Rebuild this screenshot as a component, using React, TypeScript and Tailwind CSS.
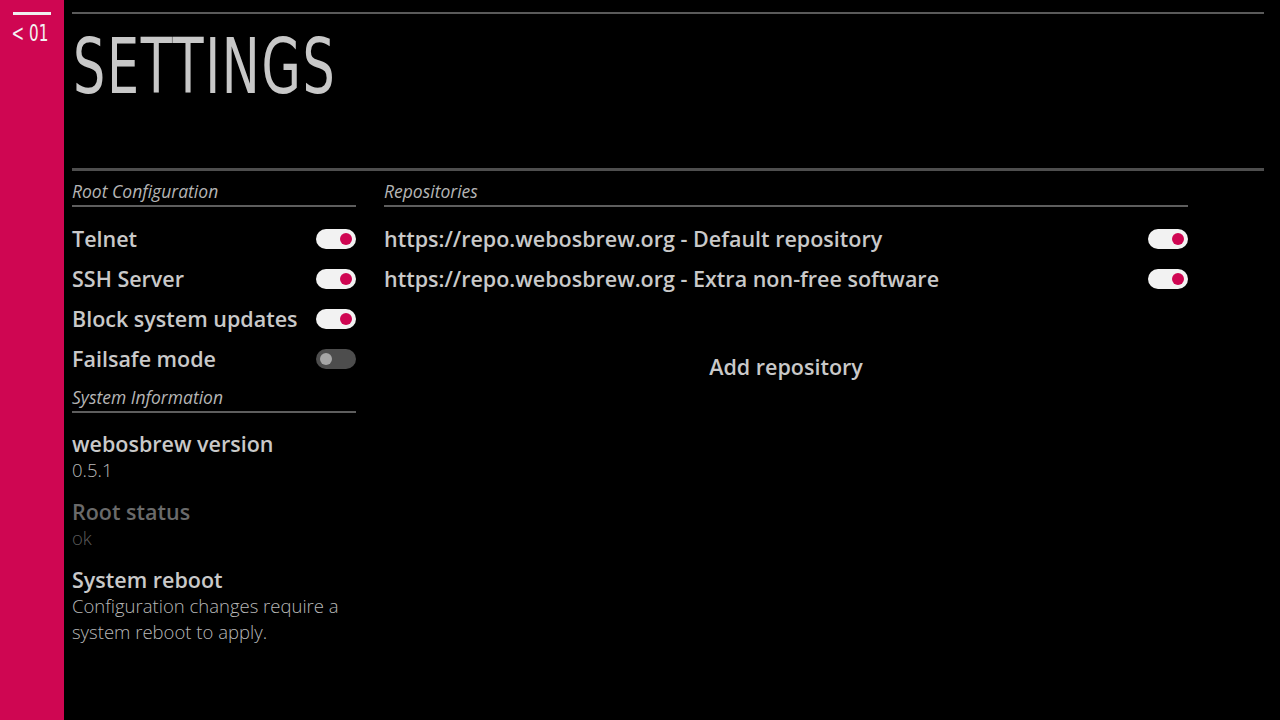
import React from 'react';

const font = { fontFamily: '"Open Sans", "Liberation Sans", sans-serif' };

const Toggle = ({ on }: { on: boolean }) => (
    <div
        className={`w-[40px] h-[20px] rounded-full flex items-center px-[4px] shrink-0 -mt-[2px] ${
            on ? 'bg-[#f2f2f2] justify-end' : 'bg-[#4d4d4d] justify-start'
        }`}
    >
        <div className={`w-[12px] h-[12px] rounded-full ${on ? 'bg-[#cf0652]' : 'bg-[#a6a6a6]'}`} />
    </div>
);

const SectionHeader = ({ title }: { title: string }) => (
    <div className="h-[36px] flex items-center border-b-2 border-[#5e5e5e] text-[17.5px] italic text-[#b5b5b5] pt-[6px]">
        {title}
    </div>
);

const ToggleRow = ({ label, on }: { label: string; on: boolean }) => (
    <div className="h-[40px] flex items-center justify-between">
        <span className="text-[21.5px] font-semibold text-[#c9c9c9] leading-[28px] -mt-[2px]">{label}</span>
        <Toggle on={on} />
    </div>
);

const InfoItem = ({ title, value, dim }: { title: string; value: string; dim?: boolean }) => (
    <div className={`flex flex-col mb-[16px] ${dim ? 'text-[#6a6a6a]' : 'text-[#c9c9c9]'}`}>
        <span className="text-[21.5px] font-semibold leading-[26px]">{title}</span>
        <span className={`text-[18.5px] leading-[26px] font-light ${dim ? 'text-[#5c5c5c]' : 'text-[#b8b8b8]'}`}>
            {value}
        </span>
    </div>
);

export default function App() {
    return (
        <div className="w-[1280px] h-[720px] bg-black flex overflow-hidden" style={font}>
            {/* SIDEBAR */}
            <div className="w-[64px] h-full bg-[#cf0652] flex flex-col items-center pt-[12px]">
                <div className="w-[38px] h-[3px] bg-[#f0f0f0]" />
                <span
                    className="text-[23px] text-[#f3f3f3] leading-[24px] mt-[6px] scale-x-[0.66] whitespace-nowrap -ml-[4px]"
                    style={{ fontFamily: '"DejaVu Sans", sans-serif', fontWeight: 400 }}
                >
                    &lt; 01
                </span>
            </div>

            {/* PANEL */}
            <div className="flex-1 flex flex-col pl-[8px] pr-[16px]">
                {/* HEADER */}
                <div className="mt-[12px] h-[2px] bg-[#5a5a5a]" />
                <div className="h-[154px] flex items-start">
                    <h1
                        className="text-[77px] leading-[104px] text-[#c8c8c8] tracking-[2.5px] origin-left scale-x-[0.66] whitespace-nowrap mt-[1px] ml-[1px]"
                        style={{ fontFamily: '"DejaVu Sans", sans-serif', fontWeight: 400 }}
                    >
                        SETTINGS
                    </h1>
                </div>
                <div className="h-[3px] bg-[#4e4e4e]" />

                {/* CONTENT */}
                <div className="flex gap-[28px]">
                    <div className="w-[284px] flex flex-col">
                        <SectionHeader title="Root Configuration" />
                        <div className="pt-[13px] pb-[8px] flex flex-col">
                            <ToggleRow label="Telnet" on />
                            <ToggleRow label="SSH Server" on />
                            <ToggleRow label="Block system updates" on />
                            <ToggleRow label="Failsafe mode" on={false} />
                        </div>
                        <div className="-mt-[11px]">
                            <SectionHeader title="System Information" />
                        </div>
                        <div className="pt-[18px] flex flex-col">
                            <InfoItem title="webosbrew version" value="0.5.1" />
                            <InfoItem title="Root status" value="ok" dim />
                            <div className="flex flex-col text-[#c9c9c9]">
                                <span className="text-[21.5px] font-semibold leading-[26px]">System reboot</span>
                                <span className="text-[18.5px] leading-[26px] font-light text-[#b8b8b8] pr-[10px]">
                                    Configuration changes require a system reboot to apply.
                                </span>
                            </div>
                        </div>
                    </div>

                    <div className="w-[804px] flex flex-col">
                        <SectionHeader title="Repositories" />
                        <div className="pt-[13px] flex flex-col">
                            <ToggleRow label="https://repo.webosbrew.org - Default repository" on />
                            <ToggleRow label="https://repo.webosbrew.org - Extra non-free software" on />
                        </div>
                        <div className="mt-[47px] h-[40px] flex items-center justify-center text-[21.5px] font-semibold text-[#c9c9c9]">
                            Add repository
                        </div>
                    </div>
                </div>
            </div>
        </div>
    );
}
